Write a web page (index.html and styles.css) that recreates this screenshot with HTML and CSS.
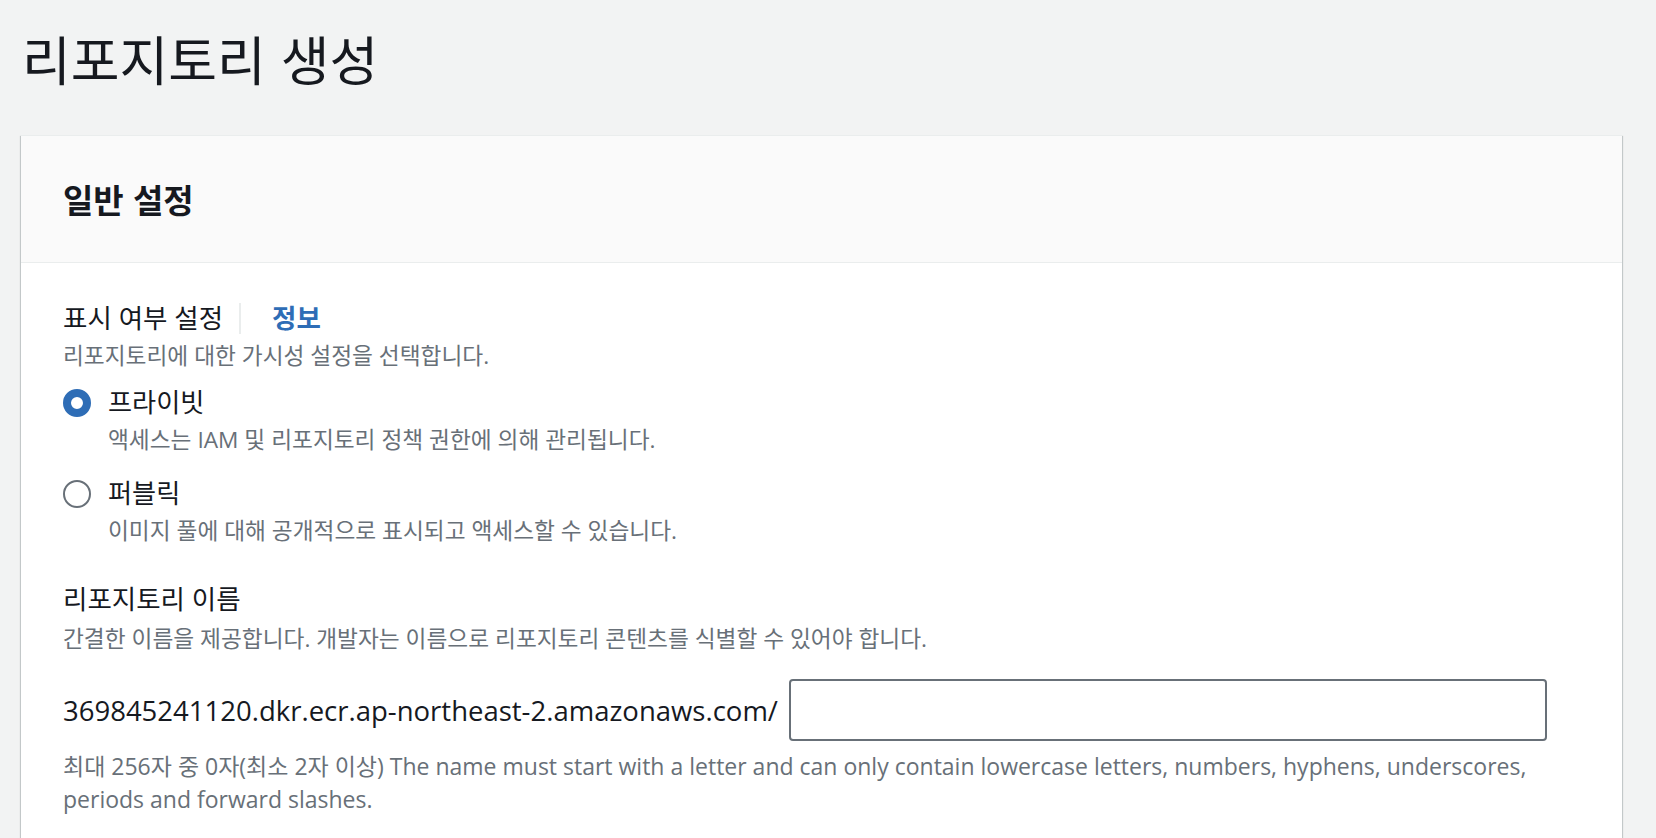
FILE: index.html
```html
<!DOCTYPE html>
<html lang="ko">
<head>
  <meta charset="UTF-8">
  <title>리포지토리 생성</title>
  <link rel="stylesheet" href="styles.css">
</head>
<body>

  <h1 class="page-title">리포지토리 생성</h1>

  <div class="panel">
    <div class="panel-header">
      <h2>일반 설정</h2>
    </div>

    <div class="panel-body">
      <div class="field">
        <div class="field-label">
          <span>표시 여부 설정</span>
          <span class="divider"></span>
          <a href="#" class="info-link">정보</a>
        </div>
        <div class="field-desc">리포지토리에 대한 가시성 설정을 선택합니다.</div>

        <div class="radio-group">
          <label class="radio">
            <span class="radio-row">
              <span class="radio-dot checked"></span>
              <span class="radio-label">프라이빗</span>
            </span>
            <span class="radio-desc">액세스는 IAM 및 리포지토리 정책 권한에 의해 관리됩니다.</span>
          </label>
          <label class="radio">
            <span class="radio-row">
              <span class="radio-dot"></span>
              <span class="radio-label">퍼블릭</span>
            </span>
            <span class="radio-desc">이미지 풀에 대해 공개적으로 표시되고 액세스할 수 있습니다.</span>
          </label>
        </div>
      </div>

      <div class="field field-name">
        <div class="field-label">리포지토리 이름</div>
        <div class="field-desc">간결한 이름을 제공합니다. 개발자는 이름으로 리포지토리 콘텐츠를 식별할 수 있어야 합니다.</div>

        <div class="repo-input">
          <span class="repo-prefix">369845241120.dkr.ecr.ap-northeast-2.amazonaws.com/</span>
          <input type="text">
        </div>
        <div class="field-hint">최대 256자 중 0자(최소 2자 이상) The name must start with a letter and can only contain lowercase letters, numbers, hyphens, underscores, periods and forward slashes.</div>
      </div>
    </div>
  </div>

</body>
</html>
```

FILE: styles.css
```css
html, body {
  height: 100%;
  overflow: hidden;
}

body {
  margin: 0;
  padding: 0 34px 0 21px;
  background: #f2f3f3;
  color: #16191f;
  font-family: "Open Sans", "Noto Sans CJK KR", sans-serif;
}

.page-title {
  margin: 0 0 44px;
  padding: 26px 0 0 1px;
  font-family: "Noto Sans CJK KR", sans-serif;
  font-size: 53px;
  font-weight: 400;
  line-height: 65px;
}

.panel {
  background: #fff;
  border-top: 1px solid #eaeded;
  box-shadow: 0 1px 1px 0 rgba(0, 28, 36, 0.3),
              1px 1px 1px 0 rgba(0, 28, 36, 0.15),
              -1px 1px 1px 0 rgba(0, 28, 36, 0.15);
  min-height: 800px;
}

.panel-header {
  display: flex;
  align-items: center;
  height: 126px;
  padding: 0 42px;
  background: #fafafa;
  border-bottom: 1px solid #eaeded;
}

.panel-header h2 {
  margin: 0;
  font-family: "Noto Sans CJK KR", sans-serif;
  font-size: 33px;
  font-weight: 700;
}

.panel-body {
  padding: 37px 42px 0;
}

.field-label {
  display: flex;
  align-items: center;
  font-size: 26.5px;
  line-height: 37px;
}

.divider {
  width: 2px;
  height: 31px;
  margin: 0 31px 0 16px;
  background: #eaeded;
}

.info-link {
  color: #2e6db6;
  font-weight: 700;
  text-decoration: none;
}

.field-desc,
.radio-desc {
  color: #687078;
  font-size: 22.7px;
  line-height: 37px;
}

.radio-group {
  display: flex;
  flex-direction: column;
  gap: 17px;
  margin-top: 10px;
}

.radio {
  display: flex;
  flex-direction: column;
}

.radio-row {
  display: flex;
  align-items: center;
  gap: 17px;
  font-size: 26.2px;
  line-height: 37px;
}

.radio-dot {
  box-sizing: border-box;
  width: 28px;
  height: 28px;
  border: 2px solid #687078;
  border-radius: 50%;
  background: #fff;
}

.radio-dot.checked {
  border: 8px solid #2e6db6;
}

.radio-desc {
  padding-left: 45px;
}

.field-name {
  margin-top: 32px;
}

.field-name .field-desc {
  margin-top: 2px;
}

.repo-input {
  display: flex;
  align-items: center;
  gap: 11px;
  margin-top: 22px;
}

.repo-prefix {
  font-size: 27.5px;
}

.repo-input input {
  box-sizing: border-box;
  width: 758px;
  height: 62px;
  border: 2px solid #687078;
  border-radius: 4px;
  outline: none;
}

.field-hint {
  margin-top: 9px;
  color: #687078;
  font-size: 23px;
  line-height: 33px;
}
```
